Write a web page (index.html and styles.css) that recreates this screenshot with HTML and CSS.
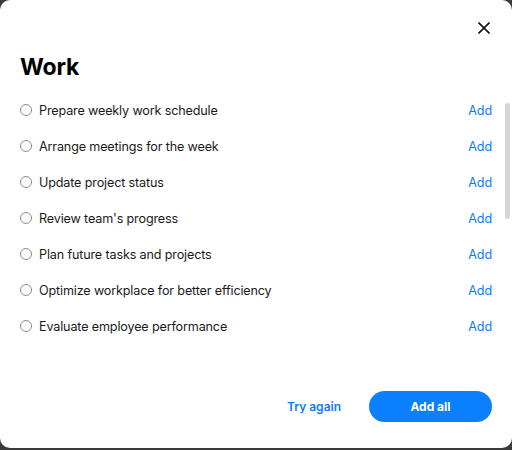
FILE: index.html
```html
<!DOCTYPE html>
<html lang="en">
<head>
<meta charset="utf-8">
<title>Work</title>
<link rel="stylesheet" href="styles.css">
</head>
<body>
<div class="modal">
  <div class="header">
    <button class="close" aria-label="Close">
      <svg width="12" height="12" viewBox="0 0 12 12"><path d="M0.5 0.5 L11.5 11.5 M11.5 0.5 L0.5 11.5" stroke="#111" stroke-width="1.6" fill="none"/></svg>
    </button>
  </div>
  <h1 class="title">Work</h1>
  <ul class="list">
    <li class="row"><span class="radio"></span><span class="label">Prepare weekly work schedule</span><span class="add">Add</span></li>
    <li class="row"><span class="radio"></span><span class="label">Arrange meetings for the week</span><span class="add">Add</span></li>
    <li class="row"><span class="radio"></span><span class="label">Update project status</span><span class="add">Add</span></li>
    <li class="row"><span class="radio"></span><span class="label">Review team's progress</span><span class="add">Add</span></li>
    <li class="row"><span class="radio"></span><span class="label">Plan future tasks and projects</span><span class="add">Add</span></li>
    <li class="row"><span class="radio"></span><span class="label">Optimize workplace for better efficiency</span><span class="add">Add</span></li>
    <li class="row"><span class="radio"></span><span class="label">Evaluate employee performance</span><span class="add">Add</span></li>
  </ul>
  <div class="scrollthumb"></div>
  <div class="footer">
    <button class="link-btn">Try again</button>
    <button class="primary-btn">Add all</button>
  </div>
</div>
</body>
</html>
```
FILE: styles.css
```css
html, body {
  margin: 0;
  padding: 0;
}
body {
  background: #3a3a3a;
  font-family: Inter, "Noto Sans", sans-serif;
  color: #111;
}
.modal {
  position: relative;
  height: 448px;
  background: #fff;
  border-radius: 10px;
  display: flex;
  flex-direction: column;
  overflow: hidden;
}
.header {
  height: 52px;
  display: flex;
  justify-content: flex-end;
  align-items: flex-start;
  padding-right: 16px;
}
.close {
  margin-top: 16px;
  width: 24px;
  height: 24px;
  padding: 0;
  border: none;
  background: none;
  display: flex;
  align-items: center;
  justify-content: center;
  cursor: pointer;
}
.title {
  margin: 0 20px;
  font-size: 23px;
  font-weight: 700;
  line-height: 30px;
  color: #000;
  letter-spacing: -0.2px;
}
.list {
  list-style: none;
  margin: 10px 0 0;
  padding: 0 20px;
}
.row {
  height: 36px;
  display: flex;
  align-items: center;
  font-size: 12.6px;
  letter-spacing: -0.15px;
}
.radio {
  width: 10px;
  height: 10px;
  border: 1px solid #8c8c8c;
  border-radius: 50%;
  margin-right: 7px;
  flex: none;
}
.label {
  flex: 1;
  color: #1a1a1a;
}
.add {
  color: #0a7cff;
}
.scrollthumb {
  position: absolute;
  right: 2px;
  top: 103px;
  width: 5px;
  height: 116px;
  border-radius: 3px;
  background: #d6d6d6;
}
.footer {
  margin-top: auto;
  padding: 0 20px 26px;
  display: flex;
  justify-content: flex-end;
  align-items: center;
  gap: 14px;
}
.link-btn {
  border: none;
  background: none;
  font-family: inherit;
  font-size: 12px;
  font-weight: 600;
  color: #0a7cff;
  padding: 0 14px;
  height: 31px;
}
.primary-btn {
  border: none;
  width: 123px;
  height: 31px;
  border-radius: 16px;
  background: #0a80ff;
  color: #fff;
  font-family: inherit;
  font-size: 12px;
  font-weight: 700;
}
```
